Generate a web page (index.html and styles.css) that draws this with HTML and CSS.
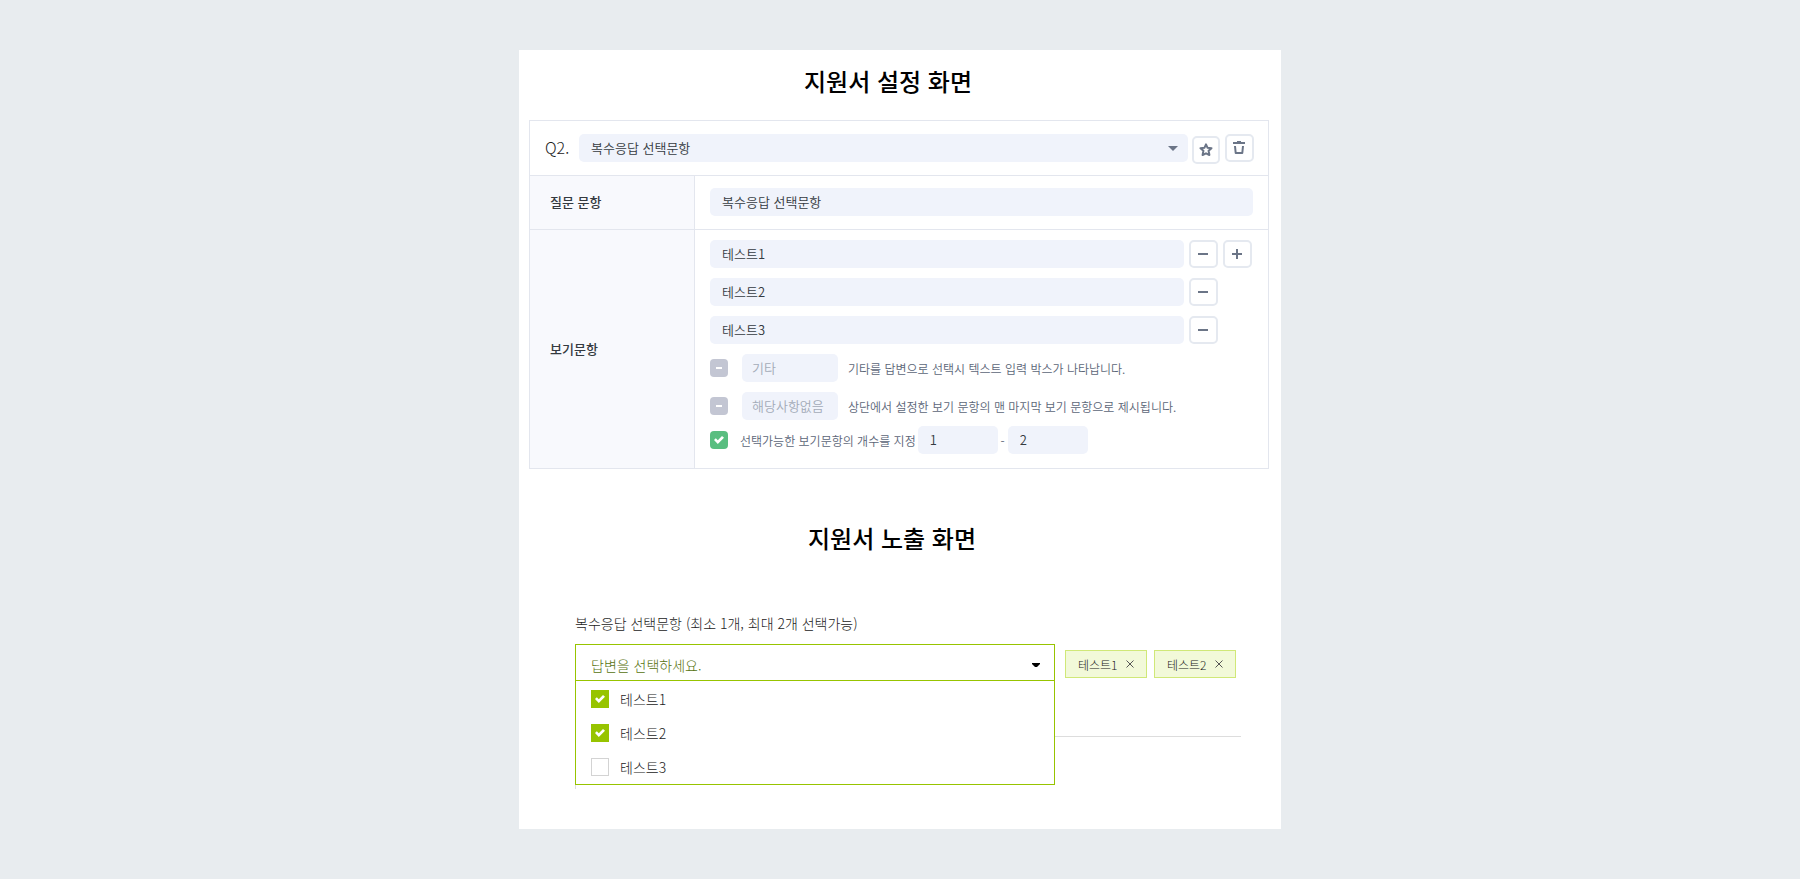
FILE: index.html
```html
<!DOCTYPE html>
<html lang="ko">

<head>
    <meta charset="utf-8">
    <title>복수응답 선택문항</title>
    <link rel="stylesheet" href="styles.css">
</head>

<body>
    <main class="card">
        <section>
            <h2 class="title">지원서 설정 화면</h2>
            <form class="setting">
                <div class="settingHead">
                    <label class="number" for="questionType">Q2.</label>
                    <div class="typeSelect">
                        <select class="box" id="questionType">
                            <option>복수응답 선택문항</option>
                        </select>
                    </div>
                    <button class="iconButton star" type="button" aria-label="즐겨찾기">
                        <svg width="14" height="14" viewBox="0 0 14 14" fill="none" stroke="#6b7587" stroke-width="2" stroke-linejoin="round"><path d="M7 1.300l1.600 3.500 3.900.4-2.900 2.600.8 4.200L7 10.300 3.600 12l.8-4.200L1.500 5.200l3.900-.4z" /></svg>
                    </button>
                    <button class="iconButton" type="button" aria-label="삭제">
                        <svg width="14" height="14" viewBox="0 0 14 14" fill="none" stroke="#6b7587" stroke-width="2"><path d="M1 2h12M5 1h4" /><path d="M3 5l.7 7h6.600l.7-7" stroke-linejoin="round" /></svg>
                    </button>
                </div>

                <div class="row">
                    <label class="rowName" for="question">질문 문항</label>
                    <div class="rowBody question">
                        <input class="box" id="question" type="text" value="복수응답 선택문항">
                    </div>
                </div>

                <div class="row">
                    <div class="rowName">보기문항</div>
                    <div class="rowBody">
                        <div class="choice">
                            <input class="box" type="text" value="테스트1" aria-label="보기 1">
                            <button class="iconButton" type="button" aria-label="보기 1 삭제">
                                <svg width="10" height="10" viewBox="0 0 10 10" stroke="#6b7587" stroke-width="2"><path d="M0 5h10" /></svg>
                            </button>
                            <button class="iconButton" type="button" aria-label="보기 추가">
                                <svg width="10" height="10" viewBox="0 0 10 10" stroke="#6b7587" stroke-width="2"><path d="M0 5h10M5 0v10" /></svg>
                            </button>
                        </div>
                        <div class="choice">
                            <input class="box" type="text" value="테스트2" aria-label="보기 2">
                            <button class="iconButton" type="button" aria-label="보기 2 삭제">
                                <svg width="10" height="10" viewBox="0 0 10 10" stroke="#6b7587" stroke-width="2"><path d="M0 5h10" /></svg>
                            </button>
                        </div>
                        <div class="choice">
                            <input class="box" type="text" value="테스트3" aria-label="보기 3">
                            <button class="iconButton" type="button" aria-label="보기 3 삭제">
                                <svg width="10" height="10" viewBox="0 0 10 10" stroke="#6b7587" stroke-width="2"><path d="M0 5h10" /></svg>
                            </button>
                        </div>
                        <div class="extra">
                            <input class="check off" id="useEtc" type="checkbox">
                            <input class="box small" type="text" placeholder="기타" aria-label="기타">
                            <label class="hint" for="useEtc">기타를 답변으로 선택시 텍스트 입력 박스가 나타납니다.</label>
                        </div>
                        <div class="extra">
                            <input class="check off" id="useNone" type="checkbox">
                            <input class="box small" type="text" placeholder="해당사항없음" aria-label="해당사항없음">
                            <label class="hint" for="useNone">상단에서 설정한 보기 문항의 맨 마지막 보기 문항으로 제시됩니다.</label>
                        </div>
                        <div class="limit">
                            <input class="check" id="useLimit" type="checkbox" checked>
                            <label class="hint" for="useLimit">선택가능한 보기문항의 개수를 지정</label>
                            <input class="box count" type="text" value="1" aria-label="최소 개수">
                            <span class="dash">-</span>
                            <input class="box count" type="text" value="2" aria-label="최대 개수">
                        </div>
                    </div>
                </div>
            </form>
        </section>

        <section class="preview">
            <h2 class="title">지원서 노출 화면</h2>
            <form class="answer">
                <p class="answerName" id="answerName">복수응답 선택문항 (최소 1개, 최대 2개 선택가능)</p>
                <div class="answerLine">
                    <div class="dropdown">
                        <button class="dropdownButton" type="button" aria-expanded="true" aria-describedby="answerName">
                            답변을 선택하세요.
                            <svg width="8" height="4" viewBox="0 0 8 4"><path d="M0 0h8v1L5 4H3L0 1z" /></svg>
                        </button>
                        <div class="dropdownList">
                            <label><input class="check lime" type="checkbox" checked>테스트1</label>
                            <label><input class="check lime" type="checkbox" checked>테스트2</label>
                            <label><input class="check lime" type="checkbox">테스트3</label>
                        </div>
                    </div>
                    <div class="tags">
                        <button class="tag" type="button">테스트1
                            <svg width="8" height="8" viewBox="0 0 8 8" stroke="#555"><path d="M.5.5l7 7M7.500.5l-7 7" /></svg>
                        </button>
                        <button class="tag" type="button">테스트2
                            <svg width="8" height="8" viewBox="0 0 8 8" stroke="#555"><path d="M.5.5l7 7M7.500.5l-7 7" /></svg>
                        </button>
                    </div>
                </div>
            </form>
            <div class="nextAnswer"></div>
        </section>
    </main>
</body>

</html>
```

FILE: styles.css
```css
* {
    box-sizing: border-box;
}

body {
    margin: 0;
    padding: 50px 16px;
    background: #e8ecef;
    font-family: "Noto Sans CJK KR", sans-serif;
    font-size: 13px;
    font-weight: 350;
    color: #343a40;
}

input,
select,
button {
    font: inherit;
    color: inherit;
    margin: 0;
}

button {
    cursor: pointer;
}

.card {
    max-width: 762px;
    margin: 0 auto;
    padding: 13px 12px 40px 10px;
    background: #fff;
}

.title {
    margin: 0 0 21px;
    padding-right: 22px;
    font-size: 24px;
    line-height: 36px;
    font-weight: 500;
    color: #000;
    text-align: center;
}

/* setting table */

.setting {
    border: 1px solid #e3e6ee;
}

.settingHead {
    display: flex;
    align-items: flex-start;
    height: 54px;
    padding: 13px 14px 0 15px;
}

.number {
    width: 34px;
    font-size: 16px;
    line-height: 26px;
    font-weight: 300;
    color: #222;
}

.box {
    flex: 1;
    width: 100%;
    min-width: 0;
    height: 28px;
    padding: 0 12px 2px;
    border: 0;
    border-radius: 5px;
    background: #f0f3fb;
}

.box::placeholder {
    color: #a3abb8;
    opacity: 1;
}

.typeSelect {
    flex: 1;
    display: flex;
    position: relative;
    margin-right: 4px;
}

.typeSelect select {
    appearance: none;
}

.typeSelect::after {
    content: "";
    position: absolute;
    right: 10px;
    top: 12px;
    width: 10px;
    height: 5px;
    background: #6b7587;
    clip-path: polygon(0 0, 100% 0, 50% 100%);
}

.iconButton {
    display: flex;
    align-items: center;
    justify-content: center;
    flex: none;
    width: 29px;
    height: 28px;
    padding: 0 1px 0 0;
    border: 2px solid #e5e9f0;
    border-radius: 5px;
    background: #fff;
}

.star {
    width: 28px;
    margin: 2px 5px 0 0;
    padding: 0;
}

.row {
    display: grid;
    grid-template-columns: 165px 1fr;
    border-top: 1px solid #e3e6ee;
}

.rowName {
    display: flex;
    align-items: center;
    padding: 0 0 2px 20px;
    border-right: 1px solid #e3e6ee;
    background: #f8f9fd;
    font-weight: 500;
}

.rowBody {
    padding: 10px 15px 14px;
}

.question {
    display: flex;
    padding-top: 12px;
    padding-bottom: 13px;
}

.choice {
    display: grid;
    grid-template-columns: 1fr 29px 29px;
    column-gap: 5px;
    margin-bottom: 10px;
    padding-right: 1px;
}

.extra {
    display: flex;
    align-items: center;
    margin-bottom: 10px;
}

.extra .box {
    flex: none;
    width: 96px;
    margin: 0 10px 0 14px;
    padding: 0 10px 2px;
}

.limit {
    display: flex;
    align-items: center;
    margin-top: -4px;
}

.limit .hint {
    margin: 0 2px 0 12px;
}

.limit .count {
    flex: none;
    width: 80px;
}

.hint,
.dash {
    font-size: 12px;
    color: #5c6678;
}

.dash {
    width: 10px;
    text-align: center;
}

.check {
    appearance: none;
    display: flex;
    align-items: center;
    justify-content: center;
    flex: none;
    width: 18px;
    height: 18px;
    border-radius: 4px;
    background: #fff;
    border: 1px solid #d3d3d3;
}

.check:checked {
    border: 0;
    background: #59be80;
}

.check:checked::before {
    content: "";
    width: 10px;
    height: 8px;
    background: #fff;
    clip-path: polygon(0 50%, 18% 28%, 38% 52%, 80% 0, 100% 22%, 38% 100%);
}

.check.off {
    border: 0;
    background: #c3c6d3;
}

.check.off::before {
    content: "";
    width: 6px;
    height: 2px;
    background: #fff;
}

.check.lime {
    border-radius: 0;
}

.check.lime:checked {
    background: #97c400;
}

/* applicant screen */

.preview {
    margin-top: 51px;
    font-weight: 300;
    color: #222;
}

.preview .title {
    padding-right: 14px;
}

.answer {
    margin: 55px 28px 0 46px;
    height: 126px;
    border-bottom: 1px solid #ddd;
}

.answerName {
    margin: 0 0 9px;
    font-size: 14px;
    line-height: 24px;
}

.answerLine {
    display: flex;
    gap: 10px;
}

.dropdown {
    position: relative;
    flex: 1;
}

.dropdownButton {
    display: flex;
    align-items: center;
    justify-content: space-between;
    width: 100%;
    height: 37px;
    padding: 4px 14px 0 15px;
    border: 1px solid #97c400;
    background: #fff;
    font-size: 14px;
    color: #56720f;
}

.dropdownList {
    position: absolute;
    top: 37px;
    left: 0;
    right: 0;
    padding-top: 1px;
    border: 1px solid #97c400;
    border-top: 0;
    background: #fff;
}

.dropdownList label {
    display: flex;
    align-items: center;
    gap: 11px;
    height: 34px;
    padding-left: 15px;
    font-size: 14px;
}

.tags {
    display: flex;
    gap: 7px;
    padding: 6px 5px 0 0;
}

.tag {
    display: flex;
    align-items: center;
    justify-content: space-between;
    width: 82px;
    height: 28px;
    padding: 0 12px;
    border: 1px solid #d0e878;
    background: #f2f9d9;
    font-size: 12px;
}

.nextAnswer {
    height: 52px;
    margin-left: 46px;
    border-left: 1px solid #ddd;
}
```
